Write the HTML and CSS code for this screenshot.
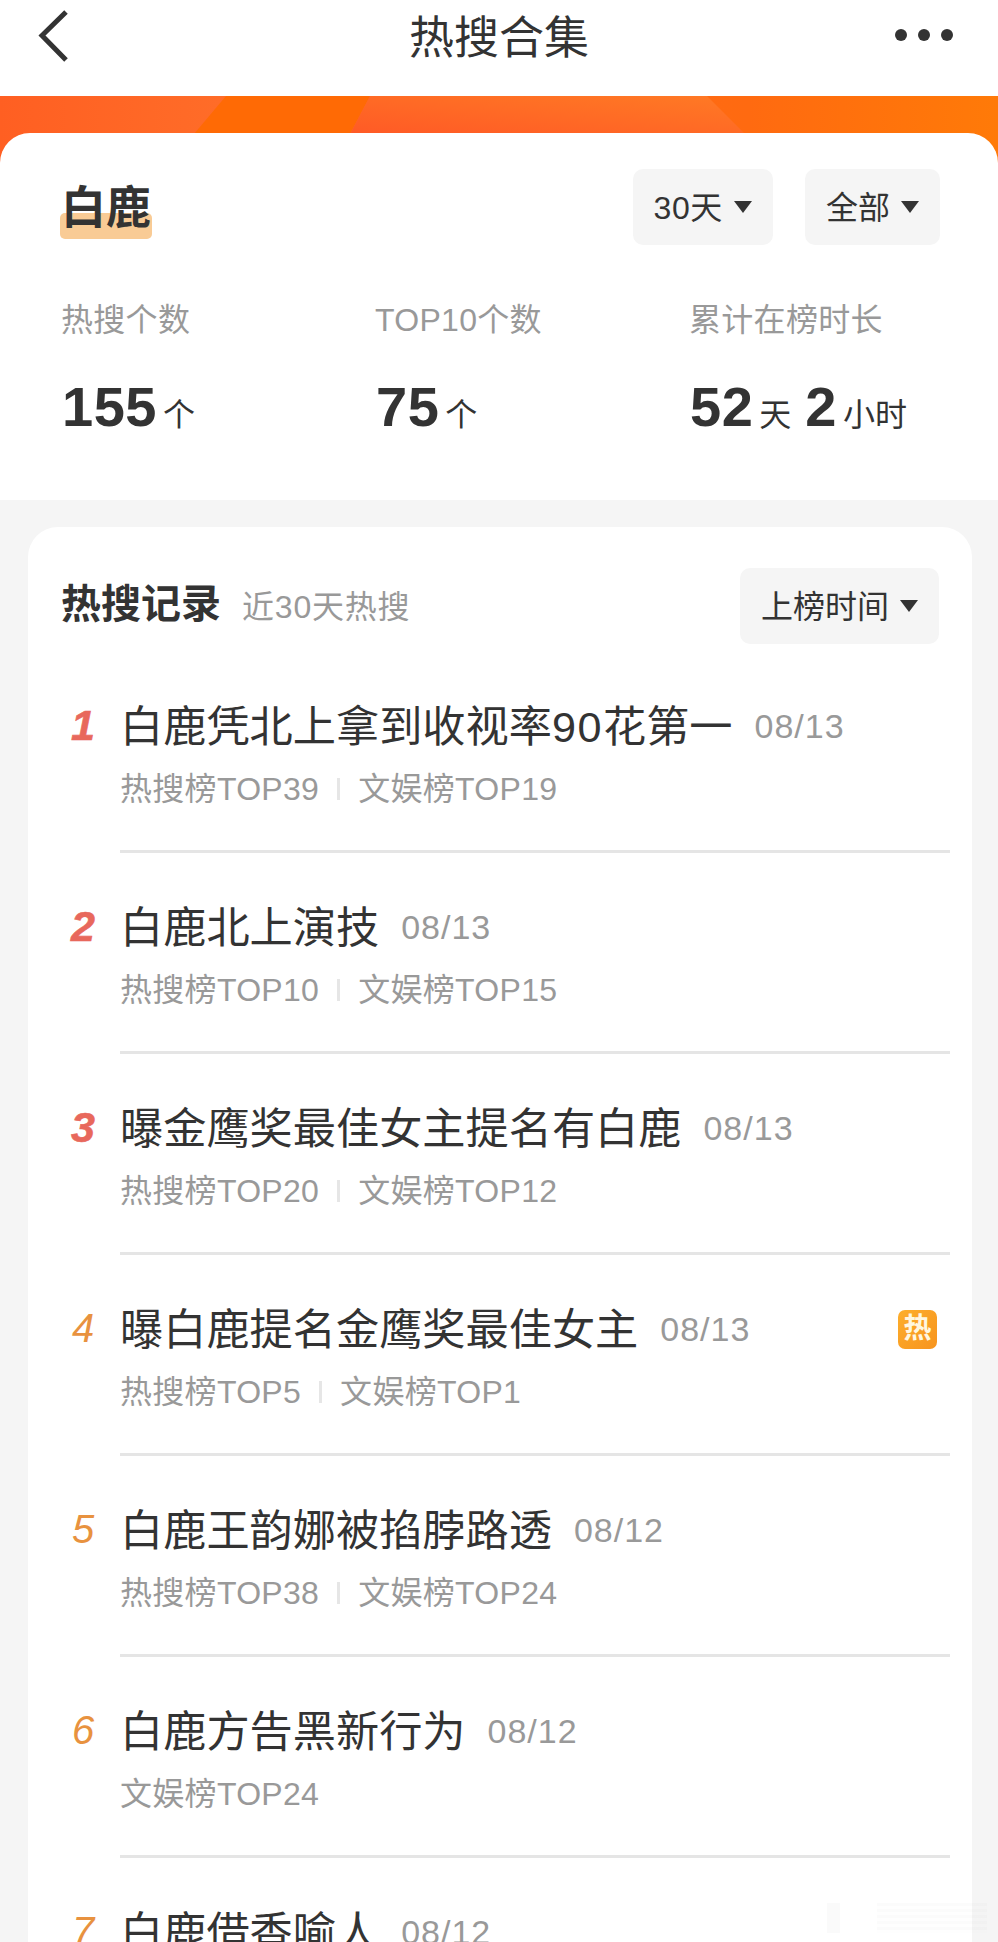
FILE: index.html

```html
<!DOCTYPE html>
<html lang="zh-Hans">
<head>
  <meta charset="UTF-8">
  <title>热搜合集</title>
  <link rel="stylesheet" href="styles.css">
</head>
<body>
  <div class="page">
    <header class="topbar">
      <svg class="back" width="32" height="54" viewBox="0 0 32 54"><path d="M29 3 L5 26.5 L29 51" fill="none" stroke="#333" stroke-width="5"/></svg>
      <h1>热搜合集</h1>
      <div class="more"><i></i><i></i><i></i></div>
    </header>

    <div class="band">
      <svg class="facets" width="998" height="38" viewBox="0 0 998 38">
        <defs>
          <linearGradient id="facetLight" x1="0" y1="1" x2="1" y2="0">
            <stop offset="0" stop-color="#ff5a26"/>
            <stop offset="1" stop-color="#ff7a24"/>
          </linearGradient>
        </defs>
        <polygon points="226,0 370,0 350,38 194,38" fill="#ff6a05"/>
        <polygon points="370,0 707,0 745,38 350,38" fill="url(#facetLight)"/>
      </svg>
    </div>

    <section class="summary">
      <div class="summary-top">
        <div class="name"><span class="mark"></span><span class="name-text">白鹿</span></div>
        <div class="pills">
          <div class="pill pill-range">30天<span class="caret"></span></div>
          <div class="pill">全部<span class="caret"></span></div>
        </div>
      </div>
      <div class="stats">
        <div class="stat">
          <div class="stat-label">热搜个数</div>
          <div class="stat-value"><b>155</b><span>个</span></div>
        </div>
        <div class="stat">
          <div class="stat-label">TOP10个数</div>
          <div class="stat-value"><b>75</b><span>个</span></div>
        </div>
        <div class="stat">
          <div class="stat-label">累计在榜时长</div>
          <div class="stat-value"><b>52</b><span>天</span><b>2</b><span>小时</span></div>
        </div>
      </div>
    </section>

    <main class="content">
      <section class="records">
        <div class="records-head">
          <h2>热搜记录</h2>
          <span class="records-note">近30天热搜</span>
          <div class="pill pill-sort">上榜时间<span class="caret"></span></div>
        </div>

        <div class="row">
          <div class="rank rank-top">1</div>
          <div class="row-body">
            <div class="row-title"><span>白鹿凭北上拿到收视率<span class="num">90</span>花第一</span><span class="date">08/13</span></div>
            <div class="row-sub"><span>热搜榜TOP39</span><i></i><span>文娱榜TOP19</span></div>
          </div>
        </div>
        <div class="row">
          <div class="rank rank-top">2</div>
          <div class="row-body">
            <div class="row-title"><span>白鹿北上演技</span><span class="date">08/13</span></div>
            <div class="row-sub"><span>热搜榜TOP10</span><i></i><span>文娱榜TOP15</span></div>
          </div>
        </div>
        <div class="row">
          <div class="rank rank-top">3</div>
          <div class="row-body">
            <div class="row-title"><span>曝金鹰奖最佳女主提名有白鹿</span><span class="date">08/13</span></div>
            <div class="row-sub"><span>热搜榜TOP20</span><i></i><span>文娱榜TOP12</span></div>
          </div>
        </div>
        <div class="row">
          <div class="rank">4</div>
          <div class="row-body">
            <div class="row-title"><span>曝白鹿提名金鹰奖最佳女主</span><span class="date">08/13</span><span class="hot">热</span></div>
            <div class="row-sub"><span>热搜榜TOP5</span><i></i><span>文娱榜TOP1</span></div>
          </div>
        </div>
        <div class="row">
          <div class="rank">5</div>
          <div class="row-body">
            <div class="row-title"><span>白鹿王韵娜被掐脖路透</span><span class="date">08/12</span></div>
            <div class="row-sub"><span>热搜榜TOP38</span><i></i><span>文娱榜TOP24</span></div>
          </div>
        </div>
        <div class="row">
          <div class="rank">6</div>
          <div class="row-body">
            <div class="row-title"><span>白鹿方告黑新行为</span><span class="date">08/12</span></div>
            <div class="row-sub"><span>文娱榜TOP24</span></div>
          </div>
        </div>
        <div class="row">
          <div class="rank">7</div>
          <div class="row-body">
            <div class="row-title"><span>白鹿借香喻人</span><span class="date">08/12</span></div>
          </div>
        </div>
      </section>
    </main>

    <div class="watermark"><i></i><i></i></div>
  </div>
</body>
</html>
```

FILE: styles.css

```css
* {
  box-sizing: border-box;
}

body {
  margin: 0;
  font-family: "Liberation Sans", "Noto Sans CJK SC", sans-serif;
  color: #333;
  background: #f5f5f5;
}

.page {
  position: relative;
  width: 998px;
  height: 1942px;
  overflow: hidden;
  background: #f5f5f5;
}

/* top bar */
.topbar {
  height: 96px;
  background: #fff;
  display: grid;
  grid-template-columns: 1fr auto 1fr;
  align-items: start;
  padding: 9px 45px 0;
}

.topbar h1 {
  margin: 2px 0 0;
  font-size: 45px;
  line-height: 56px;
  font-weight: 400;
}

.back {
  display: block;
  margin-left: -8px;
}

.more {
  display: flex;
  justify-content: flex-end;
  gap: 11px;
  padding-top: 20px;
}

.more i {
  width: 12px;
  height: 12px;
  border-radius: 50%;
  background: #333;
}

.band {
  position: relative;
  height: 68px;
  margin-bottom: -31px;
  background: linear-gradient(90deg, #ff5f22 0%, #ff6c28 22%, #ff6a10 75%, #ff7a08 100%);
}

.facets {
  position: absolute;
  left: 0;
  top: 0;
}

/* summary card */
.summary {
  position: relative;
  height: 367px;
  background: #fff;
  border-radius: 30px 30px 0 0;
  padding: 36px 58px 0 61px;
}

.summary-top {
  display: flex;
  justify-content: space-between;
}

.name {
  position: relative;
  width: 92px;
  height: 76px;
}

.mark {
  position: absolute;
  left: -1px;
  top: 44px;
  width: 92px;
  height: 26px;
  background: #f9cb95;
  border-radius: 5px;
}

.name-text {
  position: relative;
  display: block;
  font-size: 45px;
  line-height: 60px;
  font-weight: 700;
  margin-top: 10px;
}

.pills {
  display: flex;
  gap: 32px;
}

.pill {
  height: 76px;
  padding: 0 21px 4px;
  display: flex;
  align-items: center;
  gap: 11px;
  background: #f5f5f5;
  border-radius: 10px;
  font-size: 32px;
  color: #333;
}

.pill-range {
  letter-spacing: .6px;
}

.caret {
  width: 0;
  height: 0;
  margin-top: 4px;
  border-left: 9px solid transparent;
  border-right: 9px solid transparent;
  border-top: 12px solid #333;
}

.stats {
  display: flex;
  margin-top: 53px;
}

.stat {
  flex: none;
  width: 314px;
}

.stat-label {
  font-size: 32px;
  line-height: 44px;
  letter-spacing: .3px;
  color: #999;
}

.stat-value {
  display: flex;
  align-items: baseline;
  margin: 33px 0 0 1px;
  font-size: 32px;
  line-height: 64px;
}

.stat-value b {
  font-size: 56px;
  letter-spacing: .5px;
  margin-right: 6px;
}

.stat-value span {
  margin-right: 14px;
}

/* records */
.content {
  padding: 27px 26px 0 28px;
}

.records {
  background: #fff;
  border-radius: 30px 30px 0 0;
  padding: 41px 22px 0 33px;
}

.records-head {
  display: flex;
  align-items: center;
  height: 76px;
  margin-bottom: 8px;
  padding-right: 11px;
}

.records-head h2 {
  margin: 0 0 4px;
  font-size: 40px;
  font-weight: 700;
  line-height: 50px;
}

.records-note {
  margin: 0 0 4px 21px;
  font-size: 32px;
  letter-spacing: .8px;
  color: #999;
}

.pill-sort {
  margin-left: auto;
}

.row {
  display: flex;
}

.rank {
  width: 59px;
  padding-top: 48px;
  padding-right: 15px;
  text-align: center;
  font-size: 40px;
  line-height: 50px;
  font-style: italic;
  color: #e8923f;
}

.rank-top {
  font-size: 43px;
  font-weight: 700;
  color: #e8685c;
  -webkit-text-stroke: .6px #e8685c;
}

.row-body {
  flex: 1;
  height: 201px;
  padding-top: 46px;
  border-bottom: 3px solid #e5e5e5;
}

.row-title {
  display: flex;
  align-items: center;
  height: 50px;
  font-size: 43.2px;
  white-space: nowrap;
  padding-right: 13px;
}

.num {
  letter-spacing: 1.5px;
}

.date {
  margin: 6px 0 0 22px;
  font-size: 34px;
  letter-spacing: 1px;
  color: #999;
}

.hot {
  margin: 6px 0 0 auto;
  width: 39px;
  height: 39px;
  border-radius: 7px;
  background: linear-gradient(135deg, #fdae2c, #f7941e);
  color: #fff7e0;
  font-size: 28px;
  font-weight: 700;
  line-height: 38px;
  text-align: center;
}

.row-sub {
  display: flex;
  align-items: center;
  height: 40px;
  margin-top: 18px;
  font-size: 32px;
  letter-spacing: .3px;
  color: #999;
}

.row-sub i {
  width: 3px;
  height: 22px;
  margin: 6px 18px 0;
  background: #e6e6e6;
}

/* faint watermark in the corner */
.watermark {
  position: absolute;
  left: 827px;
  top: 1903px;
  width: 160px;
  height: 30px;
  display: flex;
  justify-content: space-between;
}

.watermark i {
  width: 110px;
  background: repeating-linear-gradient(180deg, rgba(0, 0, 0, .015) 0 3px, rgba(0, 0, 0, .005) 3px 6px);
}

.watermark i:first-child {
  width: 13px;
  background: rgba(0, 0, 0, .02);
}
```
